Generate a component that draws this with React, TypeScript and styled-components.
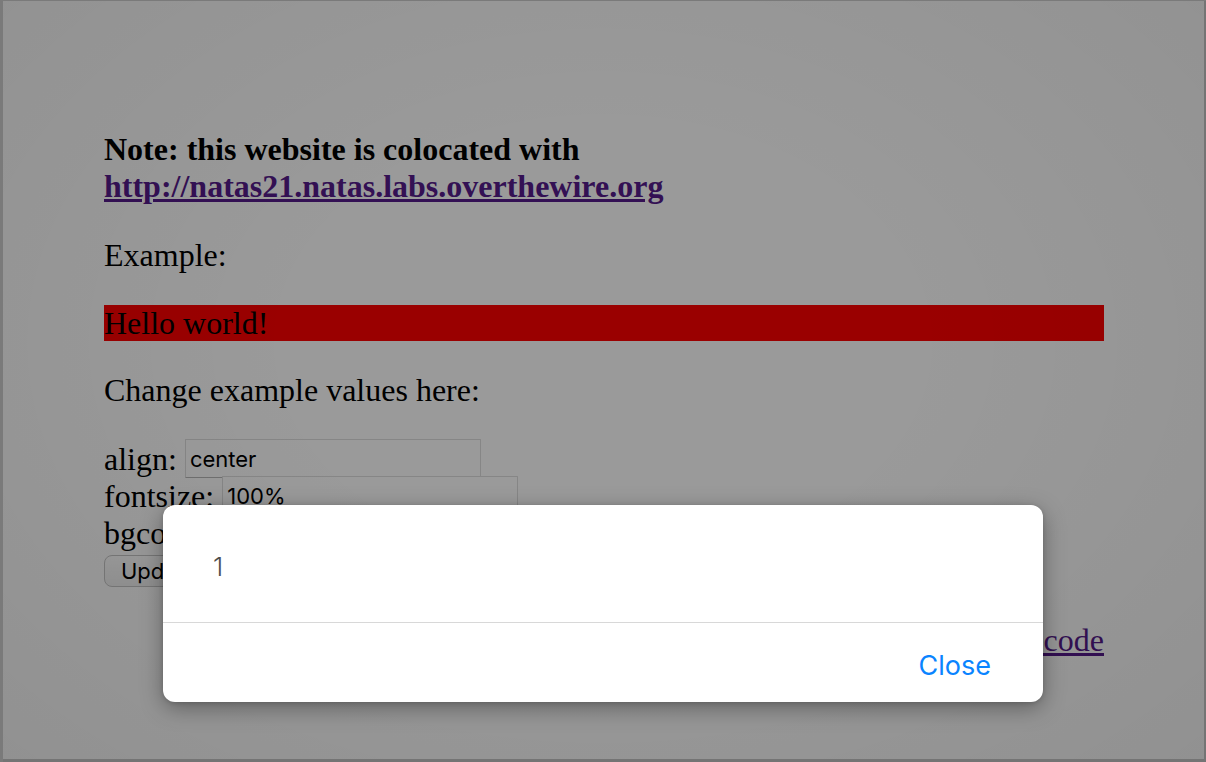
import React from "react";
import styled, { createGlobalStyle } from "styled-components";

const Global = createGlobalStyle`
  html, body { margin: 0; padding: 0; background: #fff; }
  body { font-family: "Liberation Serif", "Times New Roman", serif; }
`;

const Page = styled.div`
  position: relative;
  width: 1206px;
  height: 762px;
  overflow: hidden;
  background: #fff;
  color: #000;
  font-family: "Liberation Serif", "Times New Roman", serif;
  font-size: 32px;
`;

const Content = styled.div`
  width: 1000px;
  margin-left: 104px;
  padding-top: 131px;
`;

const P = styled.p<{ $after?: number; $bold?: boolean }>`
  margin: 0 0 ${(p) => (p.$after ?? 32)}px;
  font-weight: ${(p) => (p.$bold ? 700 : 400)};
`;

const Link = styled.a`
  color: #551a8b;
  text-decoration: underline;
  text-underline-offset: 2px;
`;

const Sample = styled.div<{ $bg: string }>`
  background: ${(p) => p.$bg};
  text-align: left;
  height: 36px;
  line-height: 36px;
  margin-bottom: 31px;
`;

const Form = styled.form`
  display: flex;
  flex-direction: column;
`;

const Row = styled.div`
  display: flex;
  align-items: flex-start;
  gap: 8px;
  height: 37px;
`;

const Label = styled.span`
  padding-top: 2px;
  line-height: 37px;
`;

const Input = styled.input`
  box-sizing: border-box;
  width: 296px;
  height: 39px;
  margin: 0;
  padding: 0 4px;
  border: 1px solid #dedede;
  border-bottom-color: #b8b8b8;
  border-radius: 1px;
  background: #fff;
  color: #000;
  font-family: Inter, "Liberation Sans", Arial, sans-serif;
  font-size: 22px;
  outline: none;
`;

const ButtonRow = styled.div`
  padding-top: 0;
`;

const Button = styled.button`
  box-sizing: border-box;
  height: 32px;
  padding: 0 16px;
  border: 1px solid #c6c6c6;
  border-radius: 8px;
  background: linear-gradient(#ffffff, #f2f2f2);
  color: #000;
  font-family: Inter, "Liberation Sans", Arial, sans-serif;
  font-size: 22px;
  line-height: 30px;
`;

const ViewSource = styled.div`
  margin-top: 35px;
  text-align: right;
`;

const Overlay = styled.div`
  position: absolute;
  inset: 0;
  display: flex;
  justify-content: center;
  align-items: flex-start;
  padding-top: 505px;
  background: radial-gradient(
    ellipse at 50% 45%,
    rgba(0, 0, 0, 0.395) 35%,
    rgba(0, 0, 0, 0.43) 100%
  );
  box-shadow: inset 3px 1px 0 #7a7a7a, inset -2px -3px 0 #747474;
`;

const Modal = styled.div`
  width: 880px;
  background: #fff;
  border-radius: 12px;
  box-shadow: 0 6px 22px rgba(0, 0, 0, 0.35), 0 1px 4px rgba(0, 0, 0, 0.15);
  font-family: Inter, "Liberation Sans", Arial, sans-serif;
  overflow: hidden;
`;

const ModalBody = styled.div`
  box-sizing: border-box;
  height: 118px;
  display: flex;
  align-items: center;
  padding: 6px 0 0 50px;
  border-bottom: 1px solid #d8d8d8;
  color: #4d4d4d;
  font-size: 26px;
  font-weight: 300;
`;

const ModalFooter = styled.div`
  box-sizing: border-box;
  height: 79px;
  display: flex;
  align-items: center;
  justify-content: flex-end;
  padding: 5px 52px 0 0;
`;

const CloseButton = styled.button`
  border: none;
  background: none;
  padding: 0;
  color: #0a84ff;
  font-family: inherit;
  font-size: 27px;
  font-weight: 400;
`;

export default function App() {
  return (
    <Page>
      <Global />
      <Content>
        <P $bold>
          Note: this website is colocated with{" "}
          <Link href="#">http://natas21.natas.labs.overthewire.org</Link>
        </P>
        <P $after={31}>Example:</P>
        <Sample $bg="#ff0000">Hello world!</Sample>
        <P $after={30}>Change example values here:</P>
        <Form onSubmit={(e) => e.preventDefault()}>
          <Row>
            <Label>align:</Label>
            <Input defaultValue="center" />
          </Row>
          <Row>
            <Label>fontsize:</Label>
            <Input defaultValue="100%" />
          </Row>
          <Row>
            <Label>bgcolor:</Label>
            <Input defaultValue="red" />
          </Row>
          <ButtonRow>
            <Button type="submit">Update</Button>
          </ButtonRow>
        </Form>
        <ViewSource>
          <Link href="#">View sourcecode</Link>
        </ViewSource>
      </Content>
      <Overlay>
        <Modal>
          <ModalBody>1</ModalBody>
          <ModalFooter>
            <CloseButton>Close</CloseButton>
          </ModalFooter>
        </Modal>
      </Overlay>
    </Page>
  );
}
